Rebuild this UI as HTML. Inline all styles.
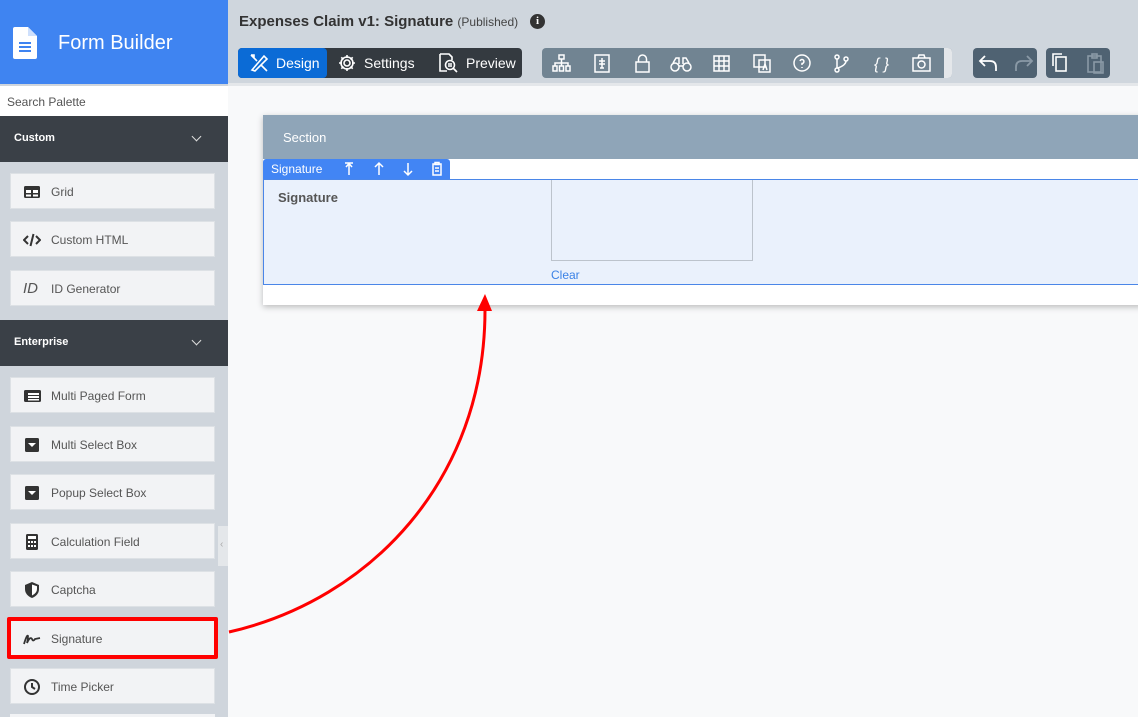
<!DOCTYPE html>
<html><head><meta charset="utf-8"><style>
*{box-sizing:border-box;margin:0;padding:0}
html,body{width:1138px;height:717px;overflow:hidden}
body{font-family:"Liberation Sans",sans-serif;background:#f8f9fa;position:relative;font-size:12px;color:#444}
.abs{position:absolute}
#side{left:0;top:0;width:228px;height:717px;background:#cfd5dc}
#brand{left:0;top:0;width:228px;height:84px;background:#3f84f1;color:#fff;font-size:20px}
.hdr{left:0;width:228px;height:46px;background:#3a4047;color:#fff;font-weight:bold;font-size:11px;padding:16px 14px}
.hdr:after{content:"";position:absolute;right:28px;top:17px;width:6px;height:6px;border-right:1.5px solid #ddd;border-bottom:1.5px solid #ddd;transform:rotate(45deg)}
.it{left:10px;width:205px;height:36px;background:#f2f3f5;border:1px solid #dde1e5;font-size:12px;color:#555;padding:11px 0 0 40px}
.ic{position:absolute;left:12px;top:9px;width:18px;height:18px}
#top{left:228px;top:0;width:910px;height:86px;background:#cfd6dd;border-bottom:3px solid #e4e7ea}
.grp{height:30px;border-radius:4px;top:48px}
.tb{color:#fff;font-size:14px;top:55px;height:20px}
.ti{position:absolute;top:52px}
</style></head><body>
<div id="side" class="abs"></div>
<div id="brand" class="abs">
<svg class="abs" style="left:13px;top:27px" width="24" height="32" viewBox="0 0 24 32"><path d="M0 2Q0 0 2 0H15L24 9V30Q24 32 22 32H2Q0 32 0 30Z" fill="#fff"/><path d="M15 0V9H24" fill="#cfe0fc"/><rect x="6" y="15" width="12" height="2" fill="#3f84f1"/><rect x="6" y="19" width="12" height="2" fill="#3f84f1"/><rect x="6" y="23" width="12" height="2" fill="#3f84f1"/></svg>
<div class="abs" style="left:58px;top:32px">Form Builder</div></div>
<div class="abs" style="left:0;top:86px;width:228px;height:30px;background:#fff;font-size:12px;color:#555;padding:9px 7px">Search Palette</div>
<div class="abs hdr" style="top:116px">Custom</div>
<div class="abs it" style="top:173px"><svg class="ic" viewBox="0 0 18 18"><rect x="1" y="3" width="16" height="12" rx="1.5" fill="#333"/><rect x="3" y="7" width="5" height="3" fill="#fff"/><rect x="10" y="7" width="5" height="3" fill="#fff"/><rect x="3" y="11.5" width="5" height="2" fill="#fff"/><rect x="10" y="11.5" width="5" height="2" fill="#fff"/></svg>Grid</div>
<div class="abs it" style="top:221px"><svg class="ic" viewBox="0 0 18 18"><path d="M5 5L1 9L5 13M13 5L17 9L13 13M10.5 3L7.5 15" stroke="#333" stroke-width="2" fill="none"/></svg>Custom HTML</div>
<div class="abs it" style="top:270px"><span class="abs" style="left:12px;top:9px;font-style:italic;font-size:15px;color:#555">ID</span>ID Generator</div>
<div class="abs hdr" style="top:320px">Enterprise</div>
<div class="abs it" style="top:377px"><svg class="ic" viewBox="0 0 18 18"><rect x="1" y="3" width="17" height="12" rx="1.5" fill="#333"/><rect x="5" y="6" width="11" height="2" fill="#fff"/><rect x="5" y="9" width="11" height="2" fill="#fff"/><rect x="5" y="12" width="11" height="1.5" fill="#fff"/></svg>Multi Paged Form</div>
<div class="abs it" style="top:426px"><svg class="ic" viewBox="0 0 18 18"><rect x="2" y="2" width="14" height="14" rx="1.5" fill="#333"/><path d="M5 7H13L9 11Z" fill="#fff"/></svg>Multi Select Box</div>
<div class="abs it" style="top:474px"><svg class="ic" viewBox="0 0 18 18"><rect x="2" y="2" width="14" height="14" rx="1.5" fill="#333"/><path d="M5 7H13L9 11Z" fill="#fff"/></svg>Popup Select Box</div>
<div class="abs it" style="top:523px"><svg class="ic" viewBox="0 0 18 18"><rect x="3" y="1" width="12" height="16" rx="1.5" fill="#333"/><rect x="5" y="3" width="8" height="3" fill="#fff"/><rect x="5" y="8" width="2" height="2" fill="#fff"/><rect x="8" y="8" width="2" height="2" fill="#fff"/><rect x="11" y="8" width="2" height="2" fill="#fff"/><rect x="5" y="12" width="2" height="2" fill="#fff"/><rect x="8" y="12" width="2" height="2" fill="#fff"/><rect x="11" y="12" width="2" height="2" fill="#fff"/></svg>Calculation Field</div>
<div class="abs it" style="top:571px"><svg class="ic" viewBox="0 0 18 18"><path d="M9 1L16 4V8Q16 14 9 17Q2 14 2 8V4Z" fill="#333"/><path d="M9 3.5V14.5Q14 12 14 8V5.3Z" fill="#fff"/></svg>Captcha</div>
<div class="abs it" style="top:620px"><svg class="ic" viewBox="0 0 18 18"><path d="M1 14Q4 4 5 6Q5 10 4 13Q7 6 9 9Q10 12 12 9L17 8" stroke="#333" stroke-width="1.8" fill="none"/></svg>Signature</div>
<div class="abs" style="left:7px;top:617px;width:211px;height:42px;border:4px solid #f00;border-radius:2px"></div>
<div class="abs it" style="top:668px"><svg class="ic" viewBox="0 0 18 18"><circle cx="9" cy="9" r="7" stroke="#333" stroke-width="2" fill="none"/><path d="M9 5V9L12 11" stroke="#333" stroke-width="2" fill="none"/></svg>Time Picker</div>
<div class="abs" style="left:10px;top:714px;width:205px;height:3px;background:#f2f3f5"></div>
<div class="abs" style="left:218px;top:526px;width:10px;height:40px;background:#e4e7ea;color:#aaa;font-size:10px;padding-top:13px;padding-left:2px">‹</div>

<div id="top" class="abs"></div>
<div class="abs" style="left:239px;top:13px;font-size:15px;font-weight:bold;color:#333">Expenses Claim v1: Signature <span style="font-weight:normal;font-size:12px;color:#444">(Published)</span></div>
<div class="abs" style="left:530px;top:14px;width:15px;height:15px;border-radius:50%;background:#333;color:#fff;font-size:11px;font-weight:bold;text-align:center;line-height:15px;font-family:'Liberation Serif',serif">i</div>
<div class="abs grp" style="left:238px;width:284px;background:#343a40"></div>
<div class="abs grp" style="left:238px;width:89px;background:#0b6bd6"></div>
<svg class="abs" style="left:249px;top:53px" width="20" height="20" viewBox="0 0 20 20" fill="none" stroke="#fff" stroke-width="1.6"><path d="M3 17L15 3L18 6L6 18Z M2 2L8 8M12 12L18 18M2 2L5 2L5 5"/></svg>
<div class="abs tb" style="left:276px">Design</div>
<svg class="abs" style="left:337px;top:53px" width="20" height="20" viewBox="0 0 20 20" fill="none" stroke="#fff" stroke-width="1.6"><circle cx="10" cy="10" r="3"/><path d="M10 2V5M10 15V18M2 10H5M15 10H18M4.3 4.3L6.5 6.5M13.5 13.5L15.7 15.7M4.3 15.7L6.5 13.5M13.5 6.5L15.7 4.3"/><circle cx="10" cy="10" r="6"/></svg>
<div class="abs tb" style="left:364px">Settings</div>
<svg class="abs" style="left:437px;top:52px" width="22" height="22" viewBox="0 0 22 22" fill="none" stroke="#fff" stroke-width="1.6"><path d="M3 2H12L15 5V8M3 2V19H10"/><circle cx="13" cy="13" r="4.5"/><path d="M16 16L20 20M11 12H15M11 14H15"/></svg>
<div class="abs tb" style="left:466px">Preview</div>
<div class="abs grp" style="left:542px;width:410px;background:#718492"></div>
<div class="abs grp" style="left:944px;width:8px;background:#e4e7ea;border-radius:0 4px 4px 0"></div>
<svg class="abs" style="left:542px;top:48px" width="402" height="30" viewBox="0 0 402 30" fill="none" stroke="#fff" stroke-width="1.5">
<g transform="translate(10,6)"><rect x="7" y="1" width="5" height="4"/><path d="M9.5 5V9M3 12V9H16V12M9.5 9V12"/><rect x="1" y="12" width="4" height="5"/><rect x="7.5" y="12" width="4" height="5"/><rect x="14" y="12" width="4" height="5"/></g>
<g transform="translate(51,6)"><rect x="2" y="1" width="14" height="17"/><path d="M9 4V14M6 7H12M6 10H12M7 14H11"/></g>
<g transform="translate(91,6)"><rect x="3" y="8" width="13" height="10"/><path d="M5.5 8V5A4 4 0 0 1 13.5 5V8"/></g>
<g transform="translate(128,6)"><circle cx="5" cy="13" r="4"/><circle cx="17" cy="13" r="4"/><path d="M9 12H13M3 9L6 4H9V10M19 9L16 4H13V10"/></g>
<g transform="translate(171,6)"><rect x="1" y="2" width="15" height="15"/><path d="M6 2V17M11 2V17M1 7H16M1 12H16"/></g>
<g transform="translate(211,6)"><rect x="1" y="1" width="11" height="12"/><rect x="6" y="6" width="11" height="12"/><path d="M10 16L12 10L14 16"/></g>
<g transform="translate(251,6)"><circle cx="9" cy="9" r="8"/><path d="M7 7A2 2 0 1 1 9 9.5V11M9 13V14"/></g>
<g transform="translate(291,6)"><circle cx="4" cy="3" r="2"/><circle cx="4" cy="16" r="2"/><circle cx="13" cy="5" r="2"/><path d="M4 5V14M13 7Q13 11 5 14"/></g>
<text x="332" y="21" fill="#fff" stroke="none" font-size="16" font-style="italic" font-family="Liberation Sans">{ }</text>
<g transform="translate(370,6)"><rect x="1" y="4" width="17" height="13"/><path d="M6 4L7 1H12L13 4"/><circle cx="9.5" cy="10.5" r="3.5"/></g>
</svg>
<div class="abs grp" style="left:973px;width:64px;background:#4f6272"></div>
<svg class="abs" style="left:978px;top:52px" width="56" height="22" viewBox="0 0 56 22" fill="none" stroke-width="1.8"><path d="M7 4L2 9L7 14M2 9H12Q18 9 18 15V19" stroke="#fff"/><path d="M49 4L54 9L49 14M54 9H44Q38 9 38 15V19" stroke="#8a99a6"/></svg>
<div class="abs grp" style="left:1046px;width:64px;background:#4f6272"></div>
<svg class="abs" style="left:1050px;top:51px" width="60" height="24" viewBox="0 0 60 24" fill="none" stroke-width="1.6"><path d="M3 15V3H12" stroke="#fff"/><rect x="6" y="6" width="10" height="14" stroke="#fff"/><rect x="38" y="5" width="13" height="16" stroke="#8a99a6"/><rect x="42" y="3" width="5" height="4" stroke="#8a99a6"/><rect x="44" y="11" width="9" height="11" stroke="#8a99a6"/></svg>

<div class="abs" style="left:263px;top:115px;width:880px;height:190px;background:#fff;box-shadow:0 2px 6px rgba(0,0,0,.25)"></div>
<div class="abs" style="left:263px;top:115px;width:880px;height:44px;background:#8fa5b8;color:#fff;font-size:13px;padding:15px 20px">Section</div>
<div class="abs" style="left:263px;top:159px;width:187px;height:21px;background:#4285f4;border-radius:3px 3px 0 0"></div>
<div class="abs" style="left:271px;top:162px;color:#fff;font-size:12px">Signature</div>
<svg class="abs" style="left:340px;top:160px" width="106" height="18" viewBox="0 0 106 18" fill="none" stroke="#fff" stroke-width="1.5"><path d="M5 3H13M9 3V15M6 7L9 3.5L12 7"/><path d="M39 3V15M35 7L39 3L43 7"/><path d="M68 3V15M64 11L68 15L72 11"/><rect x="93" y="4" width="8" height="11"/><rect x="95" y="2.5" width="4" height="2"/><path d="M95 8H99M95 11H99"/></svg>
<div class="abs" style="left:263px;top:179px;width:880px;height:106px;background:#eaf1fc;border:1px solid #4a86e8"></div>
<div class="abs" style="left:278px;top:190px;font-weight:bold;font-size:13px;color:#555">Signature</div>
<div class="abs" style="left:551px;top:180px;width:202px;height:81px;border:1px solid #bcc3cc;border-top:none"></div>
<div class="abs" style="left:551px;top:268px;font-size:12px;color:#3b82e6">Clear</div>

<svg class="abs" style="left:0;top:0" width="1138" height="717"><path d="M229 632C370 600 485 480 485 310" stroke="#f00" stroke-width="3" fill="none"/><path d="M477 311L485 294L492 311Z" fill="#f00"/></svg>
</body></html>
